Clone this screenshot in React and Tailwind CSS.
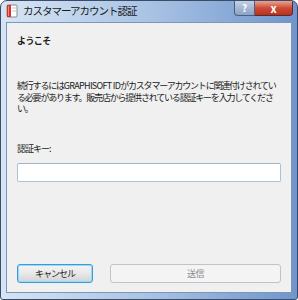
const font = { fontFamily: '"Noto Sans CJK JP", "Liberation Sans", sans-serif' };

const AppIcon = () => (
  <svg width="12" height="14" viewBox="0 0 12 14">
    <rect x="1" y="1" width="10" height="12" rx="1" fill="#ffffff" stroke="#8a8a8a" strokeWidth="1" />
    <rect x="1" y="1" width="4" height="12" fill="#d8322b" />
    <rect x="2" y="2" width="1" height="10" fill="#f08a80" />
    <line x1="6" y1="4" x2="10" y2="4" stroke="#c9c9c9" />
    <line x1="6" y1="7" x2="10" y2="7" stroke="#c9c9c9" />
  </svg>
);

export default function App() {
  return (
    <div className="w-[298px] h-[300px] bg-white" style={font}>
      <div className="w-[298px] h-[300px] flex flex-col rounded-t-[7px] rounded-b-[3px] border border-[#3a4c66] bg-gradient-to-r from-[#d6e5f5] via-[#a9c3e4] to-[#6f95cc] overflow-hidden">
        {/* Title bar */}
        <div className="h-[21px] flex items-start pl-[5px] pr-[4px] shrink-0">
          <div className="mt-[3px] w-[12px] h-[14px]">
            <AppIcon />
          </div>
          <div className="ml-[5px] mt-[3px] text-[10.5px] leading-[14px] tracking-[-1px] text-[#1a1a1a]">
            カスタマーアカウント認証
          </div>
          <div className="ml-auto flex">
            <div className="w-[21px] h-[15px] rounded-bl-[4px] border border-t-0 border-[#4a5f80] bg-gradient-to-b from-[#c2d1e6] to-[#8aa2c4] flex items-center justify-center text-white text-[10px] font-bold leading-none">
              ?
            </div>
            <div className="w-[38px] h-[15px] rounded-br-[4px] border border-t-0 border-l-0 border-[#5a2a24] bg-gradient-to-b from-[#e8a393] via-[#cd4a35] to-[#b8321f] flex items-center justify-center text-white text-[11px] font-bold leading-none">
              x
            </div>
          </div>
        </div>

        {/* Client area */}
        <div className="flex-1 mx-[5px] mb-[6px] border border-[#7d96b8] bg-[#f0f0f0] flex flex-col px-[10px] pt-[12px] text-[#1a1a1a]">
          <div className="text-[9px] leading-[12px] font-bold tracking-[-0.6px]">ようこそ</div>

          <p className="mt-[33px] text-[9px] leading-[11.5px] tracking-[-1.2px] whitespace-nowrap">
            続行するには<span className="tracking-[-0.7px]">GRAPHISOFT&nbsp;ID</span>がカスタマーアカウントに関連付けされてい
            <br />
            る必要があります。販売店から提供されている認証キーを入力してくださ
            <br />
            い。
          </p>

          <div className="mt-[28px] text-[9px] leading-[12px] tracking-[-1px]">認証キー:</div>

          <div className="mt-[8px] h-[19px] rounded-[2px] border border-[#abc1d6] border-t-[#9fb4cb] bg-white" />

          <div className="mt-auto mb-[9px] flex justify-between items-center">
            <div className="w-[76px] h-[19px] rounded-[3px] border border-[#3d9ad6] shadow-[inset_0_0_0_1px_#8fdcfb] bg-gradient-to-b from-[#f4f4f4] via-[#e8e8e8] to-[#d3d3d3] flex items-center justify-center text-[9px] tracking-[-1px] leading-none">
              キャンセル
            </div>
            <div className="w-[171px] h-[19px] rounded-[3px] border border-[#c0c4c7] bg-[#f4f4f4] flex items-center justify-center text-[9px] tracking-[-0.5px] leading-none text-[#8c8c8c]">
              送信
            </div>
          </div>
        </div>
      </div>
    </div>
  );
}
